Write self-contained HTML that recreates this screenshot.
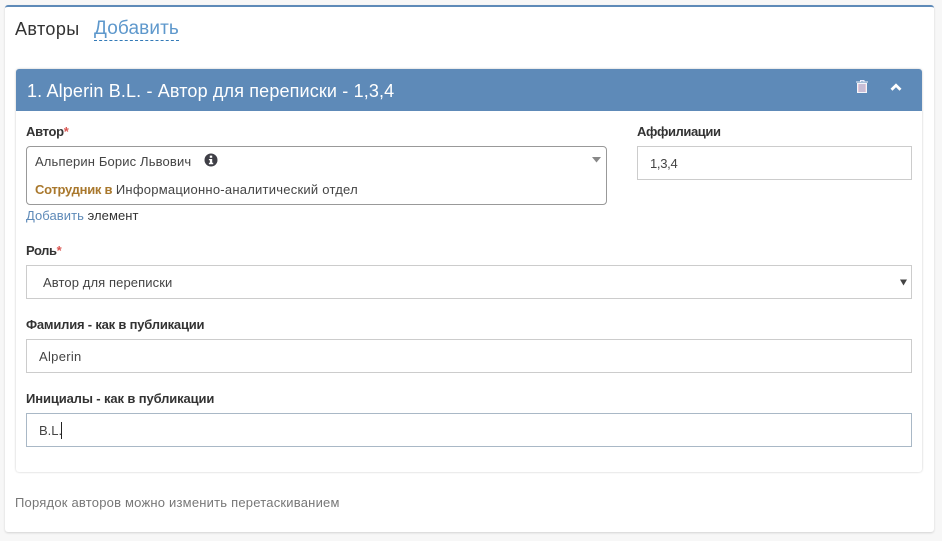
<!DOCTYPE html>
<html lang="ru">
<head>
<meta charset="utf-8">
<style>
html,body{margin:0;padding:0;background:#f7f7f7}
body{width:942px;height:541px;overflow:hidden;position:relative;font-family:"Liberation Sans",sans-serif;color:#333}
.a{position:absolute;white-space:nowrap}
.box{position:absolute;box-sizing:border-box;background:#fff;border:1px solid #ccc}
.lb{font-weight:bold;font-size:13px;line-height:16px;color:#333}
.tx{font-size:13px;line-height:16px;color:#444}
.req{color:#d9534f}
</style>
</head>
<body>
<div class="a" style="left:5px;top:5px;width:929px;height:527px;background:#fff;border-top:2px solid #5e8ab8;border-radius:3px;box-shadow:0 1px 2px rgba(0,0,0,.15);box-sizing:border-box"></div>

<div class="a" style="left:15px;top:18px;font-size:18px;line-height:22px;color:#333;letter-spacing:.4px">Авторы</div>
<div class="a" style="left:94px;top:18px;font-size:19px;line-height:22px;color:#5e98cc;border-bottom:1px dashed #337ab7;letter-spacing:.12px">Добавить</div>

<div class="a" style="left:16px;top:69px;width:906px;height:403px;background:#fff;border-radius:3px;box-shadow:0 0 2px rgba(0,0,0,.22)"></div>
<div class="a" style="left:16px;top:69px;width:906px;height:42px;background:#5e8ab8;border-radius:3px 3px 0 0"></div>
<div class="a" style="left:27px;top:80px;font-size:18px;line-height:22px;color:#fff;letter-spacing:.15px">1. Alperin B.L. - Автор для переписки - 1,3,4</div>

<svg class="a" style="left:856px;top:79px" width="13" height="15" viewBox="0 0 13 15">
<path d="M4.500 2.500V1.500h3.500v1" fill="none" stroke="#eef" stroke-width="1"/>
<rect x="0" y="2.500" width="12" height="1" fill="#f2f4fa"/>
<rect x="1.500" y="4.500" width="9" height="9" fill="#e8c9d6" stroke="#f4f6fb" stroke-width="1"/>
<path d="M4 5v8M6 5v8M8 5v8" stroke="#a9b3d6" stroke-width="1"/>
</svg>
<svg class="a" style="left:889px;top:82px" width="14" height="10" viewBox="0 0 14 10">
<path d="M2.500 7.800L7 3.300L11.500 7.800" fill="none" stroke="#fff" stroke-width="2.800"/>
</svg>

<div class="a lb" style="left:26px;top:124px;letter-spacing:-.3px">Автор<span class="req">*</span></div>
<div class="box" style="left:26px;top:146px;width:581px;height:59px;border:1px solid #999;border-radius:4px"></div>
<div class="a tx" style="left:35px;top:154px;letter-spacing:.14px">Альперин Борис Львович</div>
<svg class="a" style="left:204px;top:153px" width="14" height="14" viewBox="0 0 14 14">
<circle cx="7" cy="7" r="6.500" fill="#3f3f46"/>
<rect x="5.800" y="2.600" width="2.400" height="2.200" fill="#fff"/>
<path d="M4.900 6h3.300v3.800h1v1.400H4.900V9.800h1V7.300h-1z" fill="#fff"/>
</svg>
<svg class="a" style="left:592px;top:157px" width="9" height="6" viewBox="0 0 9 6"><path d="M0 0h9L4.500 5.500z" fill="#888"/></svg>
<div class="a tx" style="left:35px;top:182px"><b style="color:#a9782d;letter-spacing:-.28px">Сотрудник в</b> <span style="color:#444;letter-spacing:.24px">Информационно-аналитический отдел</span></div>
<div class="a tx" style="left:26px;top:208px;color:#333;letter-spacing:.06px"><span style="color:#5e8ab8">Добавить</span> элемент</div>

<div class="a lb" style="left:637px;top:124px;letter-spacing:-.4px">Аффилиации</div>
<div class="box" style="left:637px;top:146px;width:275px;height:34px"></div>
<div class="a tx" style="left:650px;top:156px;letter-spacing:-.3px">1,3,4</div>

<div class="a lb" style="left:26px;top:243px;letter-spacing:-.4px">Роль<span class="req">*</span></div>
<div class="box" style="left:26px;top:265px;width:886px;height:34px"></div>
<div class="a tx" style="left:43px;top:275px;letter-spacing:.1px">Автор для переписки</div>
<svg class="a" style="left:900px;top:279px" width="7" height="7" viewBox="0 0 7 7"><path d="M0 0.500h7L3.500 6.500z" fill="#444"/></svg>

<div class="a lb" style="left:26px;top:317px;letter-spacing:-.2px">Фамилия - как в публикации</div>
<div class="box" style="left:26px;top:339px;width:886px;height:34px"></div>
<div class="a tx" style="left:39px;top:349px;letter-spacing:.3px">Alperin</div>

<div class="a lb" style="left:26px;top:391px;letter-spacing:-.12px">Инициалы - как в публикации</div>
<div class="box" style="left:26px;top:413px;width:886px;height:34px;border-color:#a9b8c6"></div>
<div class="a tx" style="left:39px;top:423px">B.L.</div>
<div class="a" style="left:61px;top:422px;width:1px;height:17px;background:#222"></div>

<div class="a" style="left:15px;top:495px;font-size:13px;line-height:16px;color:#777;letter-spacing:.21px">Порядок авторов можно изменить перетаскиванием</div>
</body>
</html>
